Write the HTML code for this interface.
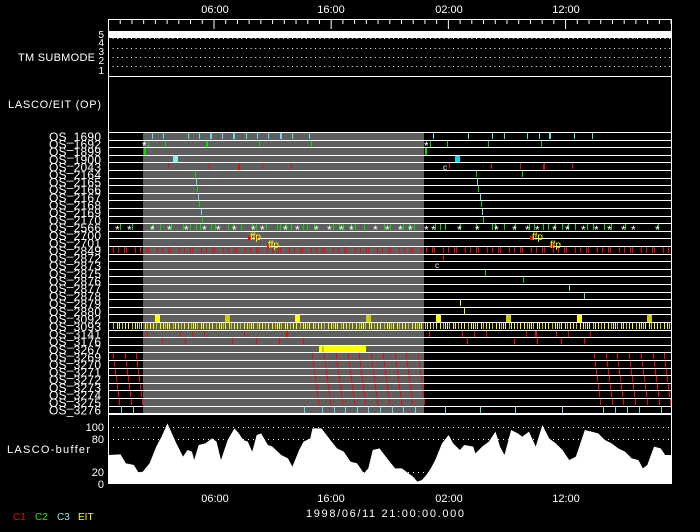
<!DOCTYPE html>
<html><head><meta charset="utf-8"><style>
html,body{margin:0;padding:0;background:#000;width:700px;height:532px;overflow:hidden}
svg{display:block}
text{font-family:"Liberation Sans",sans-serif;fill:#fff}
</style></head><body>
<svg id="s" width="700" height="532" viewBox="0 0 700 532" xmlns="http://www.w3.org/2000/svg">
<rect width="700" height="532" fill="#000"/>
<rect x="143" y="132" width="281" height="282" fill="#5f5f5f"/>
<g id="g"></g>
<g transform="translate(0,410) scale(0.44643,0.33333)">
<path fill="#fff" d="M243,221 L243,135 L270,133 L282,160 L300,165 L310,187 L320,185 L335,160 L350,110 L362,80 L375,40 L385,70 L395,100 L410,140 L420,120 L430,125 L435,150 L445,105 L460,100 L475,85 L485,95 L495,150 L510,90 L525,55 L535,70 L545,90 L555,95 L565,125 L575,75 L585,70 L600,105 L610,110 L630,135 L645,145 L655,170 L670,120 L680,95 L695,85 L700,55 L720,55 L740,90 L755,115 L770,125 L785,155 L800,160 L815,190 L825,175 L835,120 L850,115 L870,150 L885,175 L900,175 L910,185 L925,200 L935,215 L945,210 L955,195 L965,175 L975,150 L990,100 L1005,75 L1015,100 L1030,120 L1040,105 L1060,110 L1065,130 L1080,110 L1095,95 L1110,65 L1120,110 L1130,135 L1145,60 L1160,70 L1170,80 L1185,65 L1200,110 L1215,45 L1230,85 L1245,100 L1260,120 L1275,150 L1290,140 L1310,60 L1325,65 L1340,70 L1355,90 L1370,100 L1385,115 L1400,125 L1415,145 L1430,150 L1440,175 L1450,165 L1465,110 L1480,115 L1490,135 L1505,135 L1505,221 Z"/>
</g>
<g stroke="#fff" stroke-width="1" fill="none">
<line x1="108" y1="427.5" x2="672" y2="427.5" stroke-dasharray="1 4"/>
<line x1="108" y1="439.5" x2="672" y2="439.5" stroke-dasharray="1 4"/>
<line x1="108" y1="472.5" x2="672" y2="472.5" stroke-dasharray="1 4"/>
</g>
<g stroke="#fff" fill="none">
<rect x="108.5" y="19.5" width="563" height="464"/>
<line x1="108" y1="76.5" x2="672" y2="76.5"/>
<line x1="108" y1="414.5" x2="672" y2="414.5"/>
<line x1="108" y1="48.5" x2="672" y2="48.5" stroke-dasharray="1 3.6"/>
<line x1="108" y1="57.5" x2="672" y2="57.5" stroke-dasharray="1 3.6"/>
<line x1="108" y1="66.5" x2="672" y2="66.5" stroke-dasharray="1 3.6"/>
<line x1="108" y1="38.5" x2="672" y2="38.5" stroke-dasharray="1 3.6"/>
</g>
<rect x="108" y="31" width="564" height="7" fill="#fff"/>
<g id="ticks" stroke="#fff"></g>
<g font-size="11">
<text x="215" y="13" text-anchor="middle">06:00</text>
<text x="331" y="13" text-anchor="middle">16:00</text>
<text x="449" y="13" text-anchor="middle">02:00</text>
<text x="566" y="13" text-anchor="middle">12:00</text>
<text x="215" y="502" text-anchor="middle">06:00</text>
<text x="331" y="502" text-anchor="middle">16:00</text>
<text x="449" y="502" text-anchor="middle">02:00</text>
<text x="566" y="502" text-anchor="middle">12:00</text>
<text x="385" y="517" text-anchor="middle" textLength="158">1998/06/11 21:00:00.000</text>
<text x="18" y="61" textLength="77">TM SUBMODE</text>
<text x="8" y="108" textLength="93">LASCO/EIT (OP)</text>
<text x="7" y="453" textLength="83">LASCO-buffer</text>
<text x="104" y="431" text-anchor="end">100</text>
<text x="104" y="443" text-anchor="end">80</text>
<text x="104" y="476" text-anchor="end">20</text>
<text x="104" y="488" text-anchor="end">0</text>
</g>
<g font-size="10">
<text x="104" y="38" text-anchor="end">5</text>
<text x="104" y="46" text-anchor="end">4</text>
<text x="104" y="55" text-anchor="end">3</text>
<text x="104" y="64" text-anchor="end">2</text>
<text x="104" y="74" text-anchor="end">1</text>
<text x="13" y="520" style="fill:#f00">C1</text>
<text x="35" y="520" style="fill:#0f0">C2</text>
<text x="57" y="520" style="fill:#8ee">C3</text>
<text x="78" y="520" style="fill:#ff0">EIT</text>
</g>
<g font-size="12">
<text x="101" y="141" text-anchor="end" textLength="52">OS_1690</text>
<text x="101" y="148.6" text-anchor="end" textLength="52">OS_1692</text>
<text x="101" y="156.2" text-anchor="end" textLength="52">OS_1899</text>
<text x="101" y="163.8" text-anchor="end" textLength="52">OS_1900</text>
<text x="101" y="171.4" text-anchor="end" textLength="52">OS_2043</text>
<text x="101" y="179" text-anchor="end" textLength="52">OS_2164</text>
<text x="101" y="186.6" text-anchor="end" textLength="52">OS_2165</text>
<text x="101" y="194.2" text-anchor="end" textLength="52">OS_2166</text>
<text x="101" y="201.8" text-anchor="end" textLength="52">OS_2167</text>
<text x="101" y="209.4" text-anchor="end" textLength="52">OS_2168</text>
<text x="101" y="217" text-anchor="end" textLength="52">OS_2169</text>
<text x="101" y="224.6" text-anchor="end" textLength="52">OS_2170</text>
<text x="101" y="232.2" text-anchor="end" textLength="52">OS_2566</text>
<text x="101" y="239.8" text-anchor="end" textLength="52">OS_2700</text>
<text x="101" y="247.4" text-anchor="end" textLength="52">OS_2701</text>
<text x="101" y="255" text-anchor="end" textLength="52">OS_2849</text>
<text x="101" y="262.6" text-anchor="end" textLength="52">OS_2872</text>
<text x="101" y="270.2" text-anchor="end" textLength="52">OS_2873</text>
<text x="101" y="277.8" text-anchor="end" textLength="52">OS_2875</text>
<text x="101" y="285.4" text-anchor="end" textLength="52">OS_2876</text>
<text x="101" y="293" text-anchor="end" textLength="52">OS_2877</text>
<text x="101" y="300.6" text-anchor="end" textLength="52">OS_2878</text>
<text x="101" y="308.2" text-anchor="end" textLength="52">OS_2879</text>
<text x="101" y="315.8" text-anchor="end" textLength="52">OS_2880</text>
<text x="101" y="323.4" text-anchor="end" textLength="52">OS_3092</text>
<text x="101" y="331" text-anchor="end" textLength="52">OS_3093</text>
<text x="101" y="338.6" text-anchor="end" textLength="52">OS_3141</text>
<text x="101" y="346.2" text-anchor="end" textLength="52">OS_3176</text>
<text x="101" y="353.8" text-anchor="end" textLength="52">OS_3267</text>
<text x="101" y="361.4" text-anchor="end" textLength="52">OS_3269</text>
<text x="101" y="369" text-anchor="end" textLength="52">OS_3270</text>
<text x="101" y="376.6" text-anchor="end" textLength="52">OS_3271</text>
<text x="101" y="384.2" text-anchor="end" textLength="52">OS_3272</text>
<text x="101" y="391.8" text-anchor="end" textLength="52">OS_3273</text>
<text x="101" y="399.4" text-anchor="end" textLength="52">OS_3274</text>
<text x="101" y="407" text-anchor="end" textLength="52">OS_3275</text>
<text x="101" y="414.6" text-anchor="end" textLength="52">OS_3276</text>
</g>
<g font-size="10">
<text x="250" y="240" style="fill:#ff0">ffp</text>
<text x="268" y="248" style="fill:#ff0">ffp</text>
<text x="532" y="240" style="fill:#ff0">ffp</text>
<text x="550" y="248" style="fill:#ff0">ffp</text>
</g>
</svg>
<script>
(function(){
var NS="http://www.w3.org/2000/svg",g=document.getElementById('g'),tk=document.getElementById('ticks');
function L(p,x1,y1,x2,y2,c,w){var e=document.createElementNS(NS,'line');e.setAttribute('x1',x1);e.setAttribute('y1',y1);e.setAttribute('x2',x2);e.setAttribute('y2',y2);e.setAttribute('stroke',c);e.setAttribute('stroke-width',w||1);p.appendChild(e);}
function R(x,y,w,h,c){var e=document.createElementNS(NS,'rect');e.setAttribute('x',x);e.setAttribute('y',y);e.setAttribute('width',w);e.setAttribute('height',h);e.setAttribute('fill',c);g.appendChild(e);}
function T(x,y,s,c,fs){var e=document.createElementNS(NS,'text');e.setAttribute('x',x);e.setAttribute('y',y);e.setAttribute('font-size',fs||'8');e.style.fill=c;e.textContent=s;g.appendChild(e);}
for(var i=0;i<38;i++){var y=132.5+Math.round(i*7.6);L(g,108,y,672,y,'#fff',1);}
function rt(r){return 133+Math.round(r*7.6);}
function mk(r,xs,c,w){var y=rt(r);xs.forEach(function(x){L(g,x+0.5,y,x+0.5,y+6,c,w||1);});}
for(var k=0;k<=48;k++){var x=108.5+k*11.72;var big=(k%10==9);L(tk,x,19,x,big?29:24,'#fff',1);}
var cy='#5ce0f0',cc='#00d8ff',gr='#00e000',re='#f00',ye='#ff0',ol='#cc0';
mk(0,[152,163,188,199,211,222,234,246,257,268,281,292,309,433,468,492,504,527,539,550,574,592],cy);
R(210,133,2,6,cy);R(233,133,2,6,cy);R(280,133,2,6,cy);R(549,133,2,6,cy);
mk(1,[148,165,207,259,311,430,447,488,541],gr);R(206,141,2,6,gr);
T(142,150,'*','#fff','12');T(424,150,'*','#fff','12');
R(144,148,2,7,gr);R(425,148,2,7,gr);
R(173,156,5,6,'#8ee');R(455,156,5,6,cc);
mk(4,[168,209,262,291,449,491,520,544,572],re);R(238,164,2,6,re);R(543,164,2,6,re);
T(443,170,'c','#fff');
for(var r=5;r<=11;r++){var c=(r%2)?gr:cy;mk(r,[195+Math.round((r-5)*1.1)],c);mk(r,[476+Math.round((r-5)*1.2)],c);}
mk(5,[522],gr);
var gx=[120,132,153,160,171,183,190,196,200,211,215,228,233,241,252,256,266,277,280,286,291,303,307,314,333,339,343,351,355,364,384,390,403,409,414,435,440,445,460,476,492,495,504,515,529,534,543,548,555,562,568,575,587,593,604,611,625,658];
mk(12,gx,gr);
[118,130,153,170,187,205,219,235,254,263,286,298,317,330,342,352,376,388,401,411,427,434,460,478,497,515,528,538,555,568,584,597,610,624,634,658].forEach(function(x){T(x-3,234,'*','#fff','12');});
R(248,236,3,4,re);R(255,236,3,4,re);R(267,244,3,4,re);R(530,236,3,4,re);R(550,244,3,4,re);
var rx=[];var s=7;for(var x=113;x<670;){rx.push(x);s=(s*13+5)%17;x+=2+(s%8);}
mk(15,rx,re);
mk(16,[443],re);T(435,268,'c','#fff');
mk(18,[485],gr);mk(19,[523],gr);mk(20,[569],cy);mk(21,[584],cy);mk(22,[460],ye);mk(23,[464],ye);
[[155,ye],[225,ol],[295,ye],[366,ol],[436,ye],[506,ol],[577,ye],[647,ol]].forEach(function(a){R(a[0],rt(24),5,7,a[1]);});
var yx=[];s=3;for(var x=113;x<671;){yx.push(x);s=(s*7+3)%11;x+=2+(s%3);}
yx.forEach(function(x,i){mk(25,[x],(i%3==0)?ol:ye);});
mk(26,[147,180,192,204,244,286,429,462,474,486,526,556,568,590],re);R(535,rt(26),2,6,re);R(286,rt(26),2,6,re);
mk(27,[162,185,232,256,279,303,467,514,537,561,584],re);
R(319,rt(28),47,6,ye);R(322,rt(28),2,6,ol);
var dxs=[113,125,136,312,324,336,348,359,371,383,395,406,418,594,606,617,629,641,653,664];
for(var r=29;r<=35;r++){dxs.forEach(function(x){var xx=x+(r-29);if(xx<672)mk(r,[xx],re);});}
mk(36,[121,133,304,322,334,345,357,368,380,392,403,415,445,480,515,562,603,615,627,639,661],cy);
})();
</script>
</body></html>
